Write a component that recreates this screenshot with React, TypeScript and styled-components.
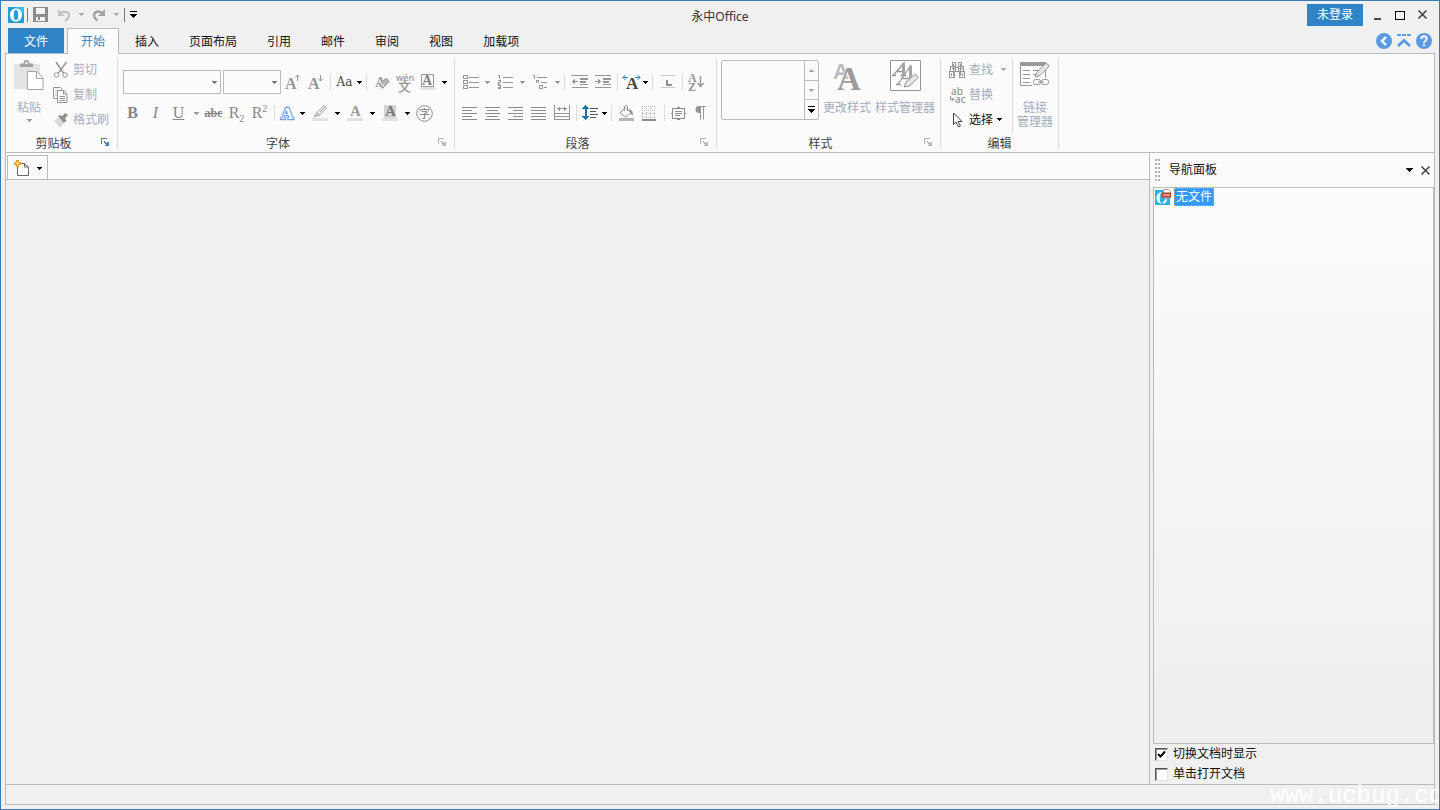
import React from "react";
import styled, { createGlobalStyle, css } from "styled-components";

const c = {
  accent: "#2f84c8",
  frame: "#3a7cb5",
  chrome: "#f0f0f0",
  surface: "#fbfbfb",
  line: "#b9bcbf",
  divider: "#dcdcdc",
  icon: "#969696",
  soft: "#e2e2e2",
  disabled: "#a3adbd",
  text: "#111",
};

const GlobalStyle = createGlobalStyle`
  * { box-sizing: border-box; }
  body { margin: 0; background: ${c.chrome}; }
  body, button, input, select {
    font: 12px/16px "Noto Sans", "Noto Sans CJK SC", sans-serif;
    color: ${c.text};
  }
  svg { display: block; flex: none; overflow: visible; }
`;

const Plain = styled.button`
  display: flex;
  align-items: center;
  justify-content: center;
  padding: 0;
  border: 0;
  background: none;
  color: inherit;
  white-space: nowrap;
`;

const Window = styled.div`
  position: relative;
  display: flex;
  flex-direction: column;
  min-height: 100vh;
  padding: 0 4px 4px;
  border: 1px solid ${c.frame};
  overflow: hidden;
`;

const TitleBar = styled.header`
  display: grid;
  grid-template-columns: 1fr auto 1fr;
  align-items: center;
  height: 27px;
`;

const QuickAccess = styled.div`
  display: flex;
  align-items: center;
  padding-left: 3px;
`;

const QuickButton = styled(Plain)<{ $w: number }>`
  width: ${(p) => p.$w}px;
  height: 22px;
`;

const QuickDivider = styled.span`
  width: 1px;
  height: 14px;
  margin: 0 3px;
  background: #777;
`;

const Title = styled.h1`
  margin: 5px 0 0;
  font-size: 12px;
  font-weight: 400;
  color: #333;
`;

const WindowControls = styled.div`
  display: flex;
  justify-content: flex-end;
  align-items: center;
  padding-right: 2px;
`;

const LoginButton = styled(Plain)`
  width: 56px;
  height: 22px;
  margin-right: 4px;
  background: ${c.accent};
  color: #fff;
`;

const ControlButton = styled(Plain)`
  width: 22px;
  height: 22px;
`;

const TabRow = styled.nav`
  display: flex;
  height: 25px;
  padding: 0 0 0 3px;
`;

const tabStyle = {
  file: css`
    padding: 2px 16px 0;
    margin-right: 3px;
    background: ${c.accent};
    color: #fff;
  `,
  active: css`
    position: relative;
    height: 26px;
    padding: 1px 13px 0;
    margin-right: 1px;
    border: 1px solid ${c.line};
    border-bottom: 0;
    background: ${c.surface};
    color: ${c.accent};
  `,
  normal: css`
    padding: 2px 15px 0;
  `,
};

const Tab = styled(Plain)<{ $kind: keyof typeof tabStyle }>`
  height: 25px;
  ${(p) => tabStyle[p.$kind]}
`;

const TabActions = styled.div`
  display: flex;
  align-items: center;
  gap: 4px;
  margin-left: auto;
  padding-right: 3px;
`;

const Frame = styled.div`
  flex: 1;
  display: flex;
  flex-direction: column;
  border: 1px solid ${c.line};
`;

const Ribbon = styled.section`
  display: flex;
  padding: 4px 0 3px;
  border-bottom: 1px solid ${c.line};
  background: ${c.surface};
`;

const GroupBox = styled.section<{ $w: number }>`
  display: flex;
  flex-direction: column;
  width: ${(p) => p.$w}px;
  height: 91px;
  border-right: 1px solid ${c.divider};
`;

const GroupBody = styled.div`
  flex: 1;
  display: flex;
`;

const GroupFooter = styled.div`
  display: flex;
  align-items: flex-start;
  height: 12px;
`;

const GroupLabel = styled.span`
  flex: 1;
  text-align: center;
  line-height: 14px;
  color: #444;
`;

const LauncherButton = styled(Plain)`
  padding: 1px 8px 0 0;
`;

const ToolRows = styled.div`
  padding: 9px 0 0 3px;
  display: flex;
  flex-direction: column;
  gap: 1px;
`;

const ToolRow = styled.div`
  display: flex;
  align-items: center;
  height: 30px;
`;

const ToolDivider = styled.span`
  width: 1px;
  height: 16px;
  margin: 0 3px;
  background: ${c.divider};
`;

const ToolButton = styled(Plain)<{ $w: number }>`
  width: ${(p) => p.$w}px;
  height: 24px;
`;

const Glyph = styled.span<{ $bold?: boolean; $italic?: boolean; $line?: string; $size?: number }>`
  font-family: "Liberation Serif", serif;
  font-size: ${(p) => p.$size ?? 16}px;
  line-height: 18px;
  font-weight: ${(p) => (p.$bold ? 700 : 400)};
  font-style: ${(p) => (p.$italic ? "italic" : "normal")};
  text-decoration: ${(p) => p.$line ?? "none"};
  color: #868686;
  sub, sup {
    font-size: 10px;
    line-height: 0;
  }
`;

const CaseGlyph = styled.span`
  font-family: "DejaVu Serif", serif;
  font-size: 12px;
  color: #444;
`;

const ComboBox = styled.span<{ $w: number }>`
  display: grid;
  align-items: center;
  width: ${(p) => p.$w}px;
  margin-left: 2px;
  select, svg {
    grid-area: 1 / 1;
  }
  select {
    width: 100%;
    height: 24px;
    border: 1px solid ${c.line};
    border-radius: 0;
    background: #fcfcfc;
    appearance: none;
    opacity: 1;
  }
  svg {
    justify-self: end;
    margin-right: 4px;
    pointer-events: none;
  }
`;

const BigButton = styled(Plain)<{ $w: number }>`
  flex-direction: column;
  justify-content: flex-start;
  width: ${(p) => p.$w}px;
  height: 76px;
  padding-top: 2px;
  color: ${c.disabled};
  line-height: 14px;
`;

const BigIcon = styled.span`
  display: flex;
  height: 41px;
`;

const Stack = styled.div`
  display: flex;
  flex-direction: column;
`;

const StackButton = styled(Plain)<{ $on?: boolean }>`
  justify-content: flex-start;
  gap: 4px;
  height: 25px;
  padding-bottom: 2px;
  color: ${(p) => (p.$on ? c.text : c.disabled)};
`;

const InnerDivider = styled.span`
  width: 1px;
  height: 76px;
  margin: 0 4px;
  background: ${c.divider};
`;

const Gallery = styled.div`
  display: flex;
  width: 98px;
  height: 60px;
  margin: 2px 3px 0 4px;
  border: 1px solid ${c.line};
  border-radius: 2px;
`;

const GalleryView = styled.div`
  flex: 1;
  border-right: 1px solid ${c.line};
`;

const GalleryButton = styled(Plain)`
  width: 13px;
  flex: 1;
  & + & {
    border-top: 1px solid ${c.line};
  }
`;

const GalleryButtons = styled.div`
  display: flex;
  flex-direction: column;
`;

const Body = styled.div`
  flex: 1;
  display: flex;
`;

const Workspace = styled.main`
  flex: 1;
  min-width: 0;
`;

const DocumentBar = styled.div`
  height: 27px;
  padding: 2px 0 0 1px;
  border-bottom: 1px solid ${c.line};
  background: ${c.surface};
`;

const NewDocument = styled(Plain)`
  width: 41px;
  height: 25px;
  gap: 6px;
  border: 1px solid ${c.line};
  border-bottom: 0;
`;

const NavPanel = styled.aside`
  display: flex;
  flex-direction: column;
  width: 285px;
  padding-left: 3px;
  border-left: 1px solid ${c.line};
`;

const NavHeader = styled.header`
  display: flex;
  align-items: center;
  height: 34px;
  margin-left: -3px;
  padding: 0 1px 0 5px;
  background: ${c.surface};
`;

const NavTitle = styled.h2`
  flex: 1;
  margin: 0 0 0 9px;
  font-size: 12px;
  font-weight: 400;
`;

const NavButton = styled(Plain)`
  width: 16px;
  height: 16px;
`;

const Tree = styled.ul`
  flex: 1;
  margin: 0;
  padding: 0 1px;
  list-style: none;
  border: 1px solid ${c.line};
  background: linear-gradient(#fcfcfc, #eeeeee);
`;

const TreeItem = styled.li`
  display: flex;
  align-items: center;
  gap: 3px;
  height: 18px;
`;

const TreeLabel = styled.span`
  padding: 0 2px;
  outline: 1px dotted #d9a05f;
  outline-offset: -1px;
  background: #3399ff;
  color: #fff;
  line-height: 18px;
`;

const Options = styled.div`
  padding-left: 2px;
`;

const Option = styled.label`
  display: flex;
  align-items: center;
  gap: 5px;
  height: 20px;
`;

const CheckBox = styled.span`
  display: grid;
  place-items: center;
  input, svg {
    grid-area: 1 / 1;
  }
  input {
    width: 13px;
    height: 13px;
    margin: 0;
    border: 1px solid #e3e3e3;
    border-top-color: #555;
    border-left-color: #555;
    background: #fff;
    box-shadow: inset 1px 1px #999;
    appearance: none;
  }
  svg {
    visibility: hidden;
    pointer-events: none;
  }
  input:checked + svg {
    visibility: visible;
  }
`;

const StatusBar = styled.footer`
  height: 20px;
  border-top: 1px solid ${c.line};
`;

const Watermark = styled.span`
  position: absolute;
  right: -4px;
  bottom: 0;
  font-family: "Liberation Mono", monospace;
  font-size: 24px;
  line-height: 26px;
  color: #fff;
  pointer-events: none;
`;

type SvgProps = { w?: number; h?: number; crisp?: boolean; children: React.ReactNode };
const Svg = ({ w = 16, h = 16, crisp, children }: SvgProps) => (
  <svg
    width={w}
    height={h}
    viewBox={`0 0 ${w} ${h}`}
    fill="none"
    stroke={c.icon}
    shapeRendering={crisp ? "crispEdges" : undefined}
    aria-hidden="true"
  >
    {children}
  </svg>
);

const Caret = ({ color = "#000", up = false }) => (
  <Svg w={5} h={3} crisp>
    <path d={up ? "M2 0h1v1H2zM1 1h3v1H1zM0 2h5v1H0z" : "M0 0h5v1H0zM1 1h3v1H1zM2 2h1v1H2z"} fill={color} stroke="none" />
  </Svg>
);

type LetterProps = {
  x: number;
  y: number;
  size: number;
  children: string;
  fill?: string;
  weight?: number;
  sans?: boolean;
};
const Letter = ({ x, y, size, children, fill = "#949494", weight = 700, sans = false }: LetterProps) => (
  <text
    x={x}
    y={y}
    fontSize={size}
    fontWeight={weight}
    fontFamily={sans ? '"Noto Sans","Noto Sans CJK SC",sans-serif' : '"Liberation Serif",serif'}
    fill={fill}
    stroke="none"
  >
    {children}
  </text>
);

const Logo = () => (
  <Svg>
    <rect width="16" height="16" fill="#1e9fd8" stroke="none" />
    <path d="M0 0h16v7L7 0z" fill="#3bbbe9" stroke="none" />
    <path
      fillRule="evenodd"
      d="M8 1.500c3.500 0 6 2.600 6 6.500s-2.500 6.500-6 6.500S2 11.900 2 8s2.500-6.500 6-6.500zm0 1.500C6.300 3 5.800 5 5.800 8s.5 5 2.200 5 2.200-2 2.200-5S9.700 3 8 3z"
      fill="#fff"
      stroke="none"
    />
  </Svg>
);

const FileLogo = () => (
  <Svg>
    <rect y="1" width="15" height="15" fill="#2ab2e4" stroke="none" />
    <path d="M7 3C3.500 3.500 1.500 6 1.500 9s2 5.500 5.500 5.500c-2-1-2.300-3-2.300-5.500S5 4.500 7 3z" fill="#fff" stroke="none" />
    <path d="M8 14c2-.5 3-2 3-4" stroke="#fff" strokeWidth="1.800" />
    <path d="M8.500.5h5l2 2V9h-7z" fill="#fff" stroke="#999" />
    <path d="M7 3.500h9v5H7z" fill="#b43a22" stroke="none" />
    <path d="M8 6h7" stroke="#fff" />
  </Svg>
);

const Save = () => (
  <Svg w={15} h={15} crisp>
    <path d="M0 0h15v15H0z" fill="#8c8c8c" stroke="none" />
    <path d="M3 1h9v6H3zM3 10h9v4H3z" fill="#f4f4f4" stroke="none" />
    <path d="M5 10h2v3H5z" fill="#8c8c8c" stroke="none" />
  </Svg>
);

const Undo = () => (
  <Svg w={14} h={14}>
    <path d="M2 6C5 3 12 2.500 12 7.500c0 2.500-2 4-4 5.500" stroke="#c3c3c3" strokeWidth="2.400" />
    <path d="M1 1v7h7z" fill="#c3c3c3" stroke="none" />
  </Svg>
);

const Redo = () => (
  <Svg w={14} h={14}>
    <path d="M11 6C8 2 2 3 2 7.500c0 2.500 2 4 3.500 5" stroke="#a3a3a3" strokeWidth="2.400" />
    <path d="M13 1v7H6z" fill="#a3a3a3" stroke="none" />
  </Svg>
);

const MoreBelow = () => (
  <Svg w={7} h={7} crisp>
    <path d="M0 0h7v1H0zM0 3h7v1H0zM1 4h5v1H1zM2 5h3v1H2zM3 6h1v1H3z" fill="#000" stroke="none" />
  </Svg>
);

const Launcher = ({ on = false }) => (
  <Svg w={8} h={8} crisp>
    <g stroke={on ? "#4a80b5" : "#b5b5b5"}>
      <path d="M.5 6V.5H6M3 3.500l3 3" />
      <path d="M3.500 7.500h4V3.500M6.500 4v3H4" />
    </g>
  </Svg>
);

const Paste = () => (
  <Svg w={30} h={31}>
    <path d="M0 4h26v25H0z" fill="#e3e3e3" stroke="none" />
    <path d="M6 7V3.500h3.500C9.500 1 10.500 0 12.500 0s3 1 3 3.500H19V7z" fill="#a2a2a2" stroke="none" />
    <circle cx="12.500" cy="3" r="1.200" fill="#fff" stroke="none" />
    <path d="M13.500 11.500h9.500l6 6.500v11.500H13.500z" fill="#fff" stroke="#a6a6a6" />
    <path d="M22.500 11.500v7h7" stroke="#a6a6a6" />
  </Svg>
);

const Cut = () => (
  <Svg>
    <path d="M3 0 10.500 11M13.500 0 5.500 11" strokeWidth="1.500" />
    <circle cx="3.500" cy="13" r="2.300" />
    <circle cx="12" cy="13" r="2.300" />
  </Svg>
);

const Copy = () => (
  <Svg>
    <path d="M4.500 11.500h-4v-11h7l2 2M4.500 3.500h6l3.500 3.500v8.500H4.500z" />
    <path d="M10.500 3.500V7H14M6.500 9.500H12M6.500 11.500H12M6.500 13.500H12M2.500 3.500h1M2.500 6h1M2.500 8.500h1" />
  </Svg>
);

const Brush = () => (
  <Svg>
    <path d="m1 9 5-4 5 6-4 5z" fill="#dadada" stroke="none" />
    <path d="m5 4 2.500-1L9 4.500 12 1l3 2-3 3.500 1.500 2L11 11z" fill="#8d8d8d" stroke="none" />
  </Svg>
);

const SizeArrow = ({ down = false }) => (
  <Svg>
    <Letter x={0} y={15} size={16}>A</Letter>
    <path d={down ? "M12.500 1v6M10 4.500 12.500 7 15 4.500" : "M12.500 7V1M10 3.500 12.500 1 15 3.500"} />
  </Svg>
);

const Eraser = () => (
  <Svg>
    <Letter x={1} y={13} size={15} fill="#a0a0a0">A</Letter>
    <path d="m5 11 7-7 3.500 3.500-7 7z" fill="#b5b5b5" stroke="#a5a5a5" />
    <path d="m7 9 3.500 3.500" stroke="#fff" />
  </Svg>
);

const Pinyin = () => (
  <Svg w={18} h={18}>
    <Letter x={0} y={8} size={9} weight={500} sans>wén</Letter>
    <Letter x={2} y={18} size={13} weight={500} sans>文</Letter>
  </Svg>
);

const BoxedLetter = () => (
  <Svg h={16}>
    <path d="M0 13h16v3H0z" fill={c.soft} stroke="none" />
    <path d="M1.500.5h12v12h-12z" fill="#fff" stroke="#999" />
    <Letter x={2} y={11} size={14} fill="#808080">A</Letter>
  </Svg>
);

const TextEffect = () => (
  <Svg h={17}>
    <g fontSize="17" fontWeight="700" fontFamily='"Liberation Serif",serif' fill="#fff">
      <text x="1" y="14" stroke="#6d9ff0" strokeWidth="2.400" paintOrder="stroke">A</text>
    </g>
  </Svg>
);

const Highlight = () => (
  <Svg h={17}>
    <path d="M0 13h16v3H0z" fill={c.soft} stroke="none" />
    <path d="M2.500 11.500 5 7.500l7-7L14.500 3l-7 7zM5 7.500 7.500 10M8 7l4.500-4.500" />
  </Svg>
);

const FontColor = ({ shade = false }) => (
  <Svg h={17}>
    <path d="M0 13h16v3H0z" fill={c.soft} stroke="none" />
    {shade && <path d="M2 0h12v13H2z" fill="#d3d3d3" stroke="none" />}
    <Letter x={3} y={11} size={15} fill={shade ? "#777" : "#9a9a9a"}>A</Letter>
  </Svg>
);

const CircledCharacter = () => (
  <Svg w={17} h={17}>
    <circle cx="8.500" cy="8.500" r="7.800" stroke="#8c8c8c" />
    <Letter x={3} y={13} size={11} weight={400} sans fill="#777">字</Letter>
  </Svg>
);

const Bullets = () => (
  <Svg crisp>
    <path d="M.5 1.500h4v3h-4zM.5 6.500h4v3h-4zM.5 11.500h4v3h-4zM6 3.500h10M6 8.500h10M6 13.500h10" />
  </Svg>
);

const Numbering = () => (
  <Svg crisp>
    <path d="M1 1.500h1.500v3M1 6.500h2v1.500H1v2h2M1 11.500h2v3H1M1 13h2M6 3.500h10M6 8.500h10M6 13.500h10" />
  </Svg>
);

const Multilevel = () => (
  <Svg crisp>
    <path d="M1 1.500h1.500v3M5 3.500h10M4.500 9V6.500h2V9M9 8.500h6M7.500 11.500h3v3h-3zM12 13.500h3" />
  </Svg>
);

const Indent = ({ out = false }) => (
  <Svg crisp>
    <path d="M0 1.500h16M8 10.500h8M0 13.500h16" />
    <path d="M8 4.500h8M8 7.500h6" strokeWidth="2" />
    <path d={out ? "M0 7.500h6M2.500 5v5M1.500 6v3" : "M0 7.500h6M3.500 5v5M4.500 6v3"} />
  </Svg>
);

const Asian = () => (
  <Svg w={17}>
    <Letter x={3} y={15} size={17} fill="#444">A</Letter>
    <path d="M0 3.500h5M2.500 1 0 3.500 2.500 6M17 3.500h-5M14.500 1 17 3.500 14.500 6" stroke="#2c7bb8" />
  </Svg>
);

const TabStop = () => (
  <Svg crisp>
    <path d="M1 1.500h14M1 13.500h14" stroke="#ccc" />
    <path d="M6 6h2v4h4v2H6z" fill="#8d8d8d" stroke="none" />
  </Svg>
);

const Sort = () => (
  <Svg h={18}>
    <Letter x={0} y={9} size={12}>A</Letter>
    <Letter x={0} y={18} size={12}>Z</Letter>
    <path d="M12.500 3v10M9.500 10l3 3.500 3-3.500" strokeWidth="1.400" />
  </Svg>
);

const Align = ({ x = 0, w = 10 }) => (
  <Svg h={15} w={15} crisp>
    <path d={`M0 1.500h15M${x} 4.500h${w}M0 7.500h15M${x} 10.500h${w}M0 13.500h15`} stroke="#8c8c8c" />
  </Svg>
);

const Distribute = () => (
  <Svg crisp>
    <path d="M.5 0v15M15.500 0v15M0 8.500h16M0 11.500h16M0 14.500h16M3 3.500h10M5.500 1.500v4M4.500 2.500v2M10.500 1.500v4M11.500 2.500v2" />
  </Svg>
);

const LineSpacing = () => (
  <Svg crisp>
    <path d="M0 4 3.500 0 7 4H4.500v7H7l-3.500 4L0 11h2.500V4z" fill="#1673b5" stroke="none" />
    <path d="M8 3.500h8M8 6.500h6M8 9.500h8M8 12.500h6" stroke="#555" />
  </Svg>
);

const Bucket = () => (
  <Svg>
    <path d="M0 13h15v3H0z" fill="#b5b5b5" stroke="none" />
    <path d="M6.500 2.500 12 8l-5.500 4L1 8zM5.500 6V2c0-2 3-2 3 0v4" />
    <path d="M10 4c3 .5 4.500 3 3.500 7L11.500 8z" fill={c.icon} stroke="none" />
  </Svg>
);

const Borders = () => (
  <Svg w={15} h={15} crisp>
    <path d="M0 .5h14M0 4.500h14M0 7.500h14M0 11h14M.5 0v12M4.500 0v12M8.500 0v12M12.500 0v12" stroke="#bbb" strokeDasharray="1 1" />
    <path d="M0 14h14" strokeWidth="2" stroke="#8c8c8c" />
  </Svg>
);

const TextFrame = () => (
  <Svg w={15} h={15} crisp>
    <path d="M1.500 2.500h12v10h-12zM4 5.500h7M4 7.500h7M4 9.500h5M0 7.500h1M14 7.500h1M6 1.500h3M6 13.500h3" stroke="#8c8c8c" />
  </Svg>
);

const Pilcrow = () => (
  <Svg w={11} h={14}>
    <path d="M6 0H4C1.500 0 .5 1.500.5 3.500S1.500 7 4 7h1v6.500h1z" fill={c.icon} stroke="none" />
    <path d="M5.500 0v13.500M8.500 0v13.500M5 .5h6" />
  </Svg>
);

const ChangeStyle = () => (
  <Svg w={28} h={32}>
    <text x="0" y="19" fontSize="22" fontWeight="700" fontFamily='"Liberation Sans",sans-serif' fill="#bcbcbc" stroke="none">A</text>
    <text x="4" y="30" fontSize="33" fontWeight="700" fontFamily='"Liberation Serif",serif' fill="#9b9b9b" stroke={c.surface} paintOrder="stroke">A</text>
  </Svg>
);

const StyleManager = () => (
  <Svg w={31} h={32}>
    <path d="M.5.5h30v30H.5z" fill="#fff" />
    <path
      d="M2 15.500h4M3.500 15 14 3v12M7 11.500h6M10.500 15.500h6M6 24.500h5M8 24 20.500 6v16M12.500 18.500h7"
      strokeWidth="1.300"
    />
    <path d="M12 3h3v12h-3zM19 6h3v14h-3z" fill="#a5a5a5" stroke="none" />
    <path d="m14 27 2-5 8-7c2-1 5 1.500 3.500 3.500L19.500 26z" fill="#e6e6e6" />
  </Svg>
);

const Find = () => (
  <Svg crisp>
    <path d="M3.500.5h3v4h-3zM9.500.5h3v4h-3zM1.500 4.500h5v5h-5zM9.500 4.500h5v5h-5zM.5 9.500h5v6h-5zM10.500 9.500h5v6h-5zM6.500 5.500h3v4h-3zM4.500 2v12M11.500 2v12M3 6.500h3M10 6.500h4M2.500 11v3M13.500 11v3" />
  </Svg>
);

const Replace = () => (
  <Svg>
    <Letter x={2} y={8} size={10} weight={500} sans>ab</Letter>
    <Letter x={6} y={16} size={10} weight={500} sans>ac</Letter>
    <path d="M1.500 9v3.500H5M3 10.500l2 2-2 2" />
  </Svg>
);

const Pointer = () => (
  <Svg>
    <path d="M4.500 1v11.500L7 10l2.500 5 2-1L9 9.500h4z" fill="#fff" stroke="#444" />
  </Svg>
);

const LinkManager = () => (
  <Svg w={30} h={30}>
    <path d="M.5 2.500h25v23H.5z" fill="#fff" />
    <path d="M0 2h26v4H0z" fill="#9a9a9a" stroke="none" />
    <path d="M3 10.500h7M3 14.500h7M3 18.500h7M3 22.500h7M13 10.500h9M13 14.500h6" />
    <path d="m15 17 2-5 8-8c2-1 5 1 3.500 3L20 15.500z" fill="#e6e6e6" />
    <path d="M12 18h18v8H12z" fill={c.surface} stroke="none" />
    <rect x="13.500" y="19.500" width="7" height="5" rx="2" />
    <rect x="21.500" y="19.500" width="7" height="5" rx="2" />
    <path d="M18 22h6" />
  </Svg>
);

const NewFile = () => (
  <Svg w={17} h={16}>
    <path d="M3.500 3.500h7l4 3.500v8.500h-11z" fill="#fff" stroke="#666" />
    <path d="M10.500 3.500V7h4" stroke="#666" />
    <path d="M3.500 0v7M0 3.500h7" stroke="#e09a2b" strokeWidth="3" />
    <path d="M3.500 1v5M1 3.500h5" stroke="#ffe08a" />
  </Svg>
);

const Close = () => (
  <Svg w={9} h={9}>
    <path d="M.5.5l8 8M8.500.5l-8 8" stroke="#444" strokeWidth="1.600" />
  </Svg>
);

const Back = () => (
  <Svg>
    <circle cx="8" cy="8" r="8" fill="#5b9be6" stroke="none" />
    <path d="M10 4 6 8l4 4" stroke="#fff" strokeWidth="2.400" />
  </Svg>
);

const Collapse = () => (
  <Svg>
    <path d="M1 2h14" stroke="#5b9be6" strokeWidth="2" strokeDasharray="4 1" />
    <path d="m2 13 6-5.500 6 5.500" stroke="#5b9be6" strokeWidth="2.800" />
  </Svg>
);

const Help = () => (
  <Svg>
    <circle cx="8" cy="8" r="8" fill="#5b9be6" stroke="none" />
    <path d="M5.300 6c0-3.500 5.400-3.500 5.400-.3C10.700 7.700 8 7.700 8 10M8 11.300v2" stroke="#fff" strokeWidth="2" />
  </Svg>
);

const Grip = () => (
  <Svg w={5} h={23} crisp>
    <path d="M1 0v23M4 0v23" stroke="#b0b0b0" strokeDasharray="2 2" strokeWidth="2" />
  </Svg>
);

type ToolProps = {
  label: string;
  w?: number;
  caret?: "on" | "off";
  caretWidth?: number;
  children: React.ReactNode;
};
const Tool = ({ label, w = 23, caret, caretWidth = 8, children }: ToolProps) => (
  <>
    <ToolButton type="button" $w={w} aria-label={label}>{children}</ToolButton>
    {caret && (
      <ToolButton type="button" $w={caretWidth} aria-label={`${label}选项`}>
        <Caret color={caret === "on" ? "#000" : "#999"} />
      </ToolButton>
    )}
  </>
);

const Combo = ({ label, w }: { label: string; w: number }) => (
  <ComboBox $w={w}>
    <select aria-label={label} disabled />
    <Caret color="#777" />
  </ComboBox>
);

type GroupProps = { title: string; w: number; launcher?: "on" | "off"; children: React.ReactNode };
const Group = ({ title, w, launcher, children }: GroupProps) => (
  <GroupBox $w={w} aria-label={title}>
    <GroupBody>{children}</GroupBody>
    <GroupFooter>
      <GroupLabel>{title}</GroupLabel>
      {launcher && (
        <LauncherButton type="button" aria-label={`${title}设置`}>
          <Launcher on={launcher === "on"} />
        </LauncherButton>
      )}
    </GroupFooter>
  </GroupBox>
);

const ClipboardBody = styled.div`
  display: flex;
  gap: 9px;
  padding-left: 8px;
`;

const EditBody = styled.div`
  display: flex;
  padding-left: 8px;
`;

const FindStack = styled(Stack)`
  width: 59px;
`;

const PasteCaret = styled.span`
  padding-top: 4px;
`;

const PadCaret = styled.span`
  margin-left: 4px;
`;

const tabs = ["插入", "页面布局", "引用", "邮件", "审阅", "视图", "加载项"];

const Checkable = ({ label, checked }: { label: string; checked?: boolean }) => (
  <Option>
    <CheckBox>
      <input type="checkbox" defaultChecked={checked} />
      <Svg w={9} h={9}>
        <path d="m1 4 2.500 2.500L8 1.500" stroke="#000" strokeWidth="2" />
      </Svg>
    </CheckBox>
    {label}
  </Option>
);

export default function App() {
  return (
    <Window>
      <GlobalStyle />
      <TitleBar>
        <QuickAccess>
          <Logo />
          <QuickDivider />
          <QuickButton type="button" $w={19} aria-label="保存"><Save /></QuickButton>
          <QuickButton type="button" $w={27} aria-label="撤销"><Undo /></QuickButton>
          <QuickButton type="button" $w={8} aria-label="撤销选项"><Caret color="#aaa" /></QuickButton>
          <QuickButton type="button" $w={27} aria-label="恢复"><Redo /></QuickButton>
          <QuickButton type="button" $w={9} aria-label="恢复选项"><Caret color="#aaa" /></QuickButton>
          <QuickDivider />
          <QuickButton type="button" $w={11} aria-label="自定义快速访问工具栏"><MoreBelow /></QuickButton>
        </QuickAccess>
        <Title>永中Office</Title>
        <WindowControls>
          <LoginButton type="button">未登录</LoginButton>
          <ControlButton type="button" aria-label="最小化">
            <Svg w={8} h={10} crisp><path d="M0 9h7" stroke="#444" strokeWidth="2" /></Svg>
          </ControlButton>
          <ControlButton type="button" aria-label="最大化">
            <Svg w={10} h={10} crisp><path d="M.5 1h9v8.500h-9zM0 1h10" stroke="#000" /></Svg>
          </ControlButton>
          <ControlButton type="button" aria-label="关闭"><Close /></ControlButton>
        </WindowControls>
      </TitleBar>

      <TabRow>
        <Tab type="button" $kind="file">文件</Tab>
        <Tab type="button" $kind="active">开始</Tab>
        {tabs.map((t) => (
          <Tab type="button" $kind="normal" key={t}>{t}</Tab>
        ))}
        <TabActions>
          <Plain type="button" aria-label="返回"><Back /></Plain>
          <Plain type="button" aria-label="折叠功能区"><Collapse /></Plain>
          <Plain type="button" aria-label="帮助"><Help /></Plain>
        </TabActions>
      </TabRow>

      <Frame>
        <Ribbon>
          <Group title="剪贴板" w={112} launcher="on">
            <ClipboardBody>
              <BigButton type="button" $w={30}>
                <BigIcon><Paste /></BigIcon>
                粘贴
                <PasteCaret><Caret color="#999" /></PasteCaret>
              </BigButton>
              <Stack>
                <StackButton type="button"><Cut />剪切</StackButton>
                <StackButton type="button"><Copy />复制</StackButton>
                <StackButton type="button"><Brush />格式刷</StackButton>
              </Stack>
            </ClipboardBody>
          </Group>

          <Group title="字体" w={337} launcher="off">
            <ToolRows>
              <ToolRow>
                <Combo label="字体名称" w={98} />
                <Combo label="字号" w={58} />
                <Tool label="增大字号"><SizeArrow /></Tool>
                <Tool label="减小字号"><SizeArrow down /></Tool>
                <ToolDivider />
                <Tool label="更改大小写" w={21} caret="on"><CaseGlyph>Aa</CaseGlyph></Tool>
                <ToolDivider />
                <Tool label="清除格式"><Eraser /></Tool>
                <Tool label="拼音指南"><Pinyin /></Tool>
                <Tool label="字符边框" w={24} caret="on"><BoxedLetter /></Tool>
              </ToolRow>
              <ToolRow>
                <Tool label="加粗"><Glyph $bold>B</Glyph></Tool>
                <Tool label="倾斜"><Glyph $italic>I</Glyph></Tool>
                <Tool label="下划线" caret="off" caretWidth={12}><Glyph $line="underline">U</Glyph></Tool>
                <Tool label="删除线"><Glyph $bold $line="line-through" $size={12}>abc</Glyph></Tool>
                <Tool label="下标"><Glyph>R<sub>2</sub></Glyph></Tool>
                <Tool label="上标"><Glyph>R<sup>2</sup></Glyph></Tool>
                <ToolDivider />
                <Tool label="文本效果" w={20} caret="on"><TextEffect /></Tool>
                <Tool label="突出显示" w={27} caret="on"><Highlight /></Tool>
                <Tool label="字体颜色" w={27} caret="on"><FontColor /></Tool>
                <Tool label="字符底纹" w={27} caret="on"><FontColor shade /></Tool>
                <Tool label="带圈字符" w={27}><CircledCharacter /></Tool>
              </ToolRow>
            </ToolRows>
          </Group>

          <Group title="段落" w={262} launcher="off">
            <ToolRows>
              <ToolRow>
                <Tool label="项目符号" w={25} caret="off"><Bullets /></Tool>
                <Tool label="编号" w={27} caret="off"><Numbering /></Tool>
                <Tool label="多级列表" w={27} caret="off"><Multilevel /></Tool>
                <ToolDivider />
                <Tool label="减少缩进"><Indent out /></Tool>
                <Tool label="增加缩进"><Indent /></Tool>
                <ToolDivider />
                <Tool label="中文版式" w={20} caret="on"><Asian /></Tool>
                <ToolDivider />
                <Tool label="制表位"><TabStop /></Tool>
                <ToolDivider />
                <Tool label="排序" w={20}><Sort /></Tool>
              </ToolRow>
              <ToolRow>
                <Tool label="左对齐"><Align /></Tool>
                <Tool label="居中"><Align x={2} w={11} /></Tool>
                <Tool label="右对齐"><Align x={5} /></Tool>
                <Tool label="两端对齐"><Align w={15} /></Tool>
                <Tool label="分散对齐"><Distribute /></Tool>
                <ToolDivider />
                <Tool label="行距" w={20} caret="on"><LineSpacing /></Tool>
                <ToolDivider />
                <Tool label="底纹"><Bucket /></Tool>
                <Tool label="边框"><Borders /></Tool>
                <ToolDivider />
                <Tool label="文本框" w={21}><TextFrame /></Tool>
                <Tool label="显示编辑标记"><Pilcrow /></Tool>
              </ToolRow>
            </ToolRows>
          </Group>

          <Group title="样式" w={224} launcher="off">
            <Gallery>
              <GalleryView />
              <GalleryButtons>
                <GalleryButton type="button" aria-label="上一行"><Caret up color="#aaa" /></GalleryButton>
                <GalleryButton type="button" aria-label="下一行"><Caret color="#aaa" /></GalleryButton>
                <GalleryButton type="button" aria-label="其他样式"><MoreBelow /></GalleryButton>
              </GalleryButtons>
            </Gallery>
            <BigButton type="button" $w={50}><BigIcon><ChangeStyle /></BigIcon>更改样式</BigButton>
            <BigButton type="button" $w={66}><BigIcon><StyleManager /></BigIcon>样式管理器</BigButton>
          </Group>

          <Group title="编辑" w={118}>
            <EditBody>
              <FindStack>
                <StackButton type="button"><Find />查找<PadCaret><Caret color="#aaa" /></PadCaret></StackButton>
                <StackButton type="button"><Replace />替换</StackButton>
                <StackButton type="button" $on><Pointer />选择<Caret /></StackButton>
              </FindStack>
              <InnerDivider />
              <BigButton type="button" $w={36}>
                <BigIcon><LinkManager /></BigIcon>
                <span>链接<br />管理器</span>
              </BigButton>
            </EditBody>
          </Group>
        </Ribbon>

        <Body>
          <Workspace>
            <DocumentBar>
              <NewDocument type="button" aria-label="新建文档"><NewFile /><Caret /></NewDocument>
            </DocumentBar>
          </Workspace>
          <NavPanel>
            <NavHeader>
              <Grip />
              <NavTitle>导航面板</NavTitle>
              <NavButton type="button" aria-label="面板选项">
                <Svg w={7} h={4} crisp><path d="M0 0h7v1H0zM1 1h5v1H1zM2 2h3v1H2zM3 3h1v1H3z" fill="#000" stroke="none" /></Svg>
              </NavButton>
              <NavButton type="button" aria-label="关闭面板"><Close /></NavButton>
            </NavHeader>
            <Tree>
              <TreeItem><FileLogo /><TreeLabel>无文件</TreeLabel></TreeItem>
            </Tree>
            <Options>
              <Checkable label="切换文档时显示" checked />
              <Checkable label="单击打开文档" />
            </Options>
          </NavPanel>
        </Body>
        <StatusBar />
      </Frame>
      <Watermark>www.ucbug.cc</Watermark>
    </Window>
  );
}
